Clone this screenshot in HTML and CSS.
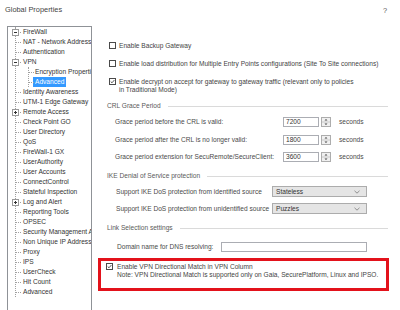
FILE: index.html
```html
<!DOCTYPE html>
<html lang="en">
<head>
  <meta charset="UTF-8" />
  <title>Global Properties</title>
  <link rel="stylesheet" href="styles.css">
</head>
<body>
  <div class="titlebar">
    <span class="title">Global Properties</span>
    <span class="help">?</span>
  </div>

  <div class="main">
    <div class="tree">
      <ul class="tree-list">
        <li class="node"><svg class="exp" viewBox="0 0 7 7"><rect x=".5" y=".5" width="6" height="6" fill="#fff" stroke="#9a9a9a"/><path d="M2 3.5h3" stroke="#333"/></svg>FireWall</li>
        <li class="node">NAT - Network Address Translation</li>
        <li class="node">Authentication</li>
        <li class="node"><svg class="exp" viewBox="0 0 7 7"><rect x=".5" y=".5" width="6" height="6" fill="#fff" stroke="#9a9a9a"/><path d="M2 3.5h3" stroke="#333"/></svg>VPN
          <ul class="tree-list sub">
            <li class="node">Encryption Properties</li>
            <li class="node"><span class="sel">Advanced</span></li>
          </ul>
        </li>
        <li class="node">Identity Awareness</li>
        <li class="node">UTM-1 Edge Gateway</li>
        <li class="node"><svg class="exp" viewBox="0 0 7 7"><rect x=".5" y=".5" width="6" height="6" fill="#fff" stroke="#9a9a9a"/><path d="M2 3.5h3M3.5 2v3" stroke="#333"/></svg>Remote Access</li>
        <li class="node">Check Point GO</li>
        <li class="node">User Directory</li>
        <li class="node">QoS</li>
        <li class="node">FireWall-1 GX</li>
        <li class="node">UserAuthority</li>
        <li class="node">User Accounts</li>
        <li class="node">ConnectControl</li>
        <li class="node">Stateful Inspection</li>
        <li class="node"><svg class="exp" viewBox="0 0 7 7"><rect x=".5" y=".5" width="6" height="6" fill="#fff" stroke="#9a9a9a"/><path d="M2 3.5h3M3.5 2v3" stroke="#333"/></svg>Log and Alert</li>
        <li class="node">Reporting Tools</li>
        <li class="node">OPSEC</li>
        <li class="node">Security Management Access</li>
        <li class="node">Non Unique IP Address Ranges</li>
        <li class="node">Proxy</li>
        <li class="node">IPS</li>
        <li class="node">UserCheck</li>
        <li class="node">Hit Count</li>
        <li class="node">Advanced</li>
      </ul>
    </div>

    <div class="pane">
      <div class="check first">
        <span class="cb"></span>
        <span>Enable Backup Gateway</span>
      </div>
      <div class="check">
        <span class="cb"></span>
        <span>Enable load distribution for Multiple Entry Points configurations (Site To Site connections)</span>
      </div>
      <div class="check">
        <span class="cb"><svg viewBox="0 0 5 5"><path d="M.7 2.5l1.3 1.3 2.4-2.8" fill="none" stroke="#333" stroke-width=".8"/></svg></span>
        <span>Enable decrypt on accept for gateway to gateway traffic (relevant only to policies<br>in Traditional Mode)</span>
      </div>

      <div class="group">CRL Grace Period</div>
      <div class="grace">
        <div class="row">
          <span class="label">Grace period before the CRL is valid:</span>
          <span class="field num">7200</span>
          <svg class="spin" viewBox="0 0 10 10"><rect x=".5" y=".5" width="9" height="9" fill="#f0f0f0" stroke="#adadad"/><path d="M1 5h8" stroke="#c8c8c8"/><path d="M3.5 3.5l1.5-1.5 1.5 1.5zM3.5 6.5l1.5 1.5 1.5-1.5z" fill="#444"/></svg>
          <span class="unit">seconds</span>
        </div>
        <div class="row">
          <span class="label">Grace period after the CRL is no longer valid:</span>
          <span class="field num">1800</span>
          <svg class="spin" viewBox="0 0 10 10"><rect x=".5" y=".5" width="9" height="9" fill="#f0f0f0" stroke="#adadad"/><path d="M1 5h8" stroke="#c8c8c8"/><path d="M3.5 3.5l1.5-1.5 1.5 1.5zM3.5 6.5l1.5 1.5 1.5-1.5z" fill="#444"/></svg>
          <span class="unit">seconds</span>
        </div>
        <div class="row">
          <span class="label">Grace period extension for SecuRemote/SecureClient:</span>
          <span class="field num">3600</span>
          <svg class="spin" viewBox="0 0 10 10"><rect x=".5" y=".5" width="9" height="9" fill="#f0f0f0" stroke="#adadad"/><path d="M1 5h8" stroke="#c8c8c8"/><path d="M3.5 3.5l1.5-1.5 1.5 1.5zM3.5 6.5l1.5 1.5 1.5-1.5z" fill="#444"/></svg>
          <span class="unit">seconds</span>
        </div>
      </div>

      <div class="group ike">IKE Denial of Service protection</div>
      <div class="support">
        <div class="row">
          <span class="label">Support IKE DoS protection from identified source</span>
          <span class="select">Stateless<svg viewBox="0 0 6 4"><path d="M.5 .8l2.5 2.4 2.5-2.4" fill="none" stroke="#777" stroke-width=".8"/></svg></span>
        </div>
        <div class="row">
          <span class="label">Support IKE DoS protection from unidentified source</span>
          <span class="select">Puzzles<svg viewBox="0 0 6 4"><path d="M.5 .8l2.5 2.4 2.5-2.4" fill="none" stroke="#777" stroke-width=".8"/></svg></span>
        </div>
      </div>

      <div class="group link">Link Selection settings</div>
      <div class="dns row">
        <span class="label">Domain name for DNS resolving:</span>
        <span class="field wide"></span>
      </div>

      <div class="highlight">
        <div class="check">
          <span class="cb"><svg viewBox="0 0 5 5"><path d="M.7 2.5l1.3 1.3 2.4-2.8" fill="none" stroke="#333" stroke-width=".8"/></svg></span>
          <span>Enable VPN Directional Match in VPN Column<br>Note: VPN Directional Match is supported only on Gaia, SecurePlatform, Linux and IPSO.</span>
        </div>
      </div>
    </div>
  </div>
</body>
</html>
```

FILE: styles.css
```css
html,
body {
  margin: 0;
  overflow: hidden;
}

body {
  width: 400px;
  height: 310px;
  background: #ffffff;
  font-family: 'Liberation Sans', Arial, sans-serif;
  font-size: 6.6px;
  color: #444444;
}

.titlebar {
  display: flex;
  justify-content: space-between;
  align-items: center;
  height: 18px;
  padding: 0 13px 0 5px;
}

.title {
  font-size: 7.4px;
  color: #444444;
}

.help {
  font-size: 7.4px;
  margin-top: 2px;
  color: #555555;
}

.main {
  display: flex;
  margin-top: 8px;
}

/* tree */

.tree {
  width: 83px;
  height: 290px;
  margin-left: 7px;
  border: 1px solid #8f9297;
  overflow: hidden;
  color: #333333;
}

.tree-list {
  list-style: none;
  margin: 0 0 0 7px;
  padding: 0;
  border-left: 1px dotted #a0a0a0;
}

.node {
  position: relative;
  padding-left: 7px;
  line-height: 10px;
  white-space: nowrap;
}

.node::before {
  content: "";
  position: absolute;
  left: 0;
  top: 5px;
  width: 5px;
  border-top: 1px dotted #a0a0a0;
}

.exp {
  position: absolute;
  left: -4px;
  top: 2px;
  width: 7px;
  height: 7px;
}

.sub {
  margin-left: 5px;
}

.sub .node {
  padding-left: 6px;
}

.sel {
  display: inline-block;
  margin-left: -2px;
  padding: 0 2px;
  line-height: 10px;
  background: #3399ff;
  color: #ffffff;
}

/* right pane */

.pane {
  flex: 1;
  margin-left: 6px;
  padding: 0 11px;
  line-height: 8px;
}

.check {
  display: flex;
  gap: 3px;
  margin-top: 10px;
}

.check.first {
  margin-top: 16px;
}

.cb {
  flex: none;
  box-sizing: border-box;
  width: 7px;
  height: 7px;
  border: 1px solid #4a4a4a;
  background: #ffffff;
}

.cb svg {
  display: block;
  width: 5px;
  height: 5px;
}

.group {
  display: flex;
  align-items: center;
  gap: 7px;
  margin: 8px 1px 0 -2px;
  color: #5a5a5a;
}

.group::after {
  content: "";
  flex: 1;
  border-top: 1px solid #dadada;
}

.group.ike {
  margin-top: 10px;
}

.group.link {
  margin-top: 10px;
}

.row {
  display: flex;
  align-items: center;
  color: #4a4a4a;
}

.grace {
  display: flex;
  flex-direction: column;
  gap: 7.5px;
  margin-top: 7px;
  padding-left: 6px;
}

.grace .row {
  height: 10px;
}

.grace .label {
  width: 168px;
}

.field {
  box-sizing: border-box;
  height: 10px;
  padding: 0 2px;
  line-height: 8px;
  border: 1px solid #abadb3;
  background: #ffffff;
  color: #333333;
}

.field.num {
  width: 36px;
}

.spin {
  width: 10px;
  height: 10px;
  margin-left: 2px;
}

.unit {
  margin-left: 8px;
}

.support {
  display: flex;
  flex-direction: column;
  gap: 6px;
  margin-top: 6px;
  padding-left: 7px;
}

.support .row {
  height: 11px;
}

.support .label {
  width: 156px;
}

.select {
  box-sizing: border-box;
  display: flex;
  align-items: center;
  justify-content: space-between;
  width: 95px;
  height: 11px;
  padding: 0 6px 0 3px;
  border: 1px solid #acacac;
  background: #e5e5e5;
  color: #333333;
}

.select svg {
  width: 6px;
  height: 4px;
}

.dns {
  height: 10px;
  margin-top: 10px;
  padding-left: 8px;
}

.dns .label {
  width: 104px;
}

.field.wide {
  width: 146px;
}

.highlight {
  margin: 6px 0 0 -11px;
  padding: 2px 0 9px 5px;
  border: 3px solid #e3121b;
}

.highlight .check {
  margin-top: 0;
  gap: 4px;
}
```
